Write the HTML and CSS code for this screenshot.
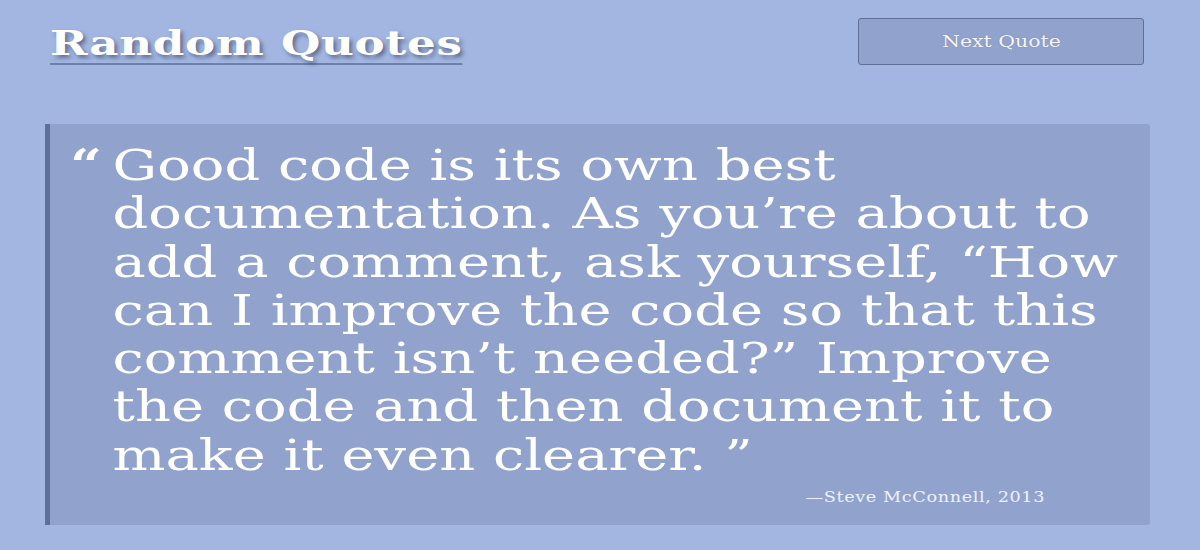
FILE: index.html
```html
<!DOCTYPE html>
<html>
<head>
<meta charset="utf-8">
<link rel="stylesheet" href="styles.css">
</head>
<body>
<header class="top">
  <h1 class="title">Random Quotes</h1>
  <button class="next"><span class="next-label">Next Quote</span></button>
</header>
<main class="quote-box">
  <div class="quote-row">
    <span class="mark open">“</span>
    <p class="quote-text">Good code is its own best documentation. As you’re about to add a comment, ask yourself, “How can I improve the code so that this comment isn’t needed?” Improve the code and then document it to make it even clearer. ”</p>
  </div>
  <div class="attribution"><span class="attr-text">—Steve McConnell, 2013</span></div>
</main>
</body>
</html>
```
FILE: styles.css
```css
html, body {
  margin: 0;
  padding: 0;
}
body {
  background: #a3b6e1;
  width: 1200px;
  height: 550px;
  overflow: hidden;
  font-family: "DejaVu Serif", "Liberation Serif", serif;
  color: #ffffff;
}
.top {
  display: flex;
  justify-content: space-between;
  align-items: flex-start;
  padding: 18px 56px 0 50px;
  height: 106px;
  box-sizing: border-box;
}
.title {
  margin: 0;
  margin-top: 9px;
  font-size: 33px;
  font-weight: bold;
  line-height: 33px;
  padding-bottom: 3px;
  border-bottom: 2px solid #6f80a8;
  text-shadow: 2px 3px 4px rgba(40, 50, 80, 0.55);
  letter-spacing: 0.5px;
  transform: scaleX(1.37);
  transform-origin: left top;
}
.next {
  width: 286px;
  height: 47px;
  background: #91a3cd;
  border: 1px solid #5f6f96;
  border-radius: 3px;
  color: #f4f6fb;
  font-family: "DejaVu Serif", "Liberation Serif", serif;
  font-size: 16px;
  padding: 0;
}
.next-label {
  display: inline-block;
  transform: scaleX(1.28);
  text-shadow: 0 0 1px rgba(60, 70, 100, 0.4);
}
.quote-box {
  margin: 18px 50px 0 45px;
  height: 401px;
  box-sizing: border-box;
  background: #91a3cd;
  border-left: 5px solid #5f6f96;
  border-radius: 0 3px 3px 0;
  padding: 18px 0 0 20px;
}
.quote-row {
  display: flex;
  width: 802px;
  transform: scaleX(1.33);
  transform-origin: left top;
  font-size: 42px;
  line-height: 48.3px;
}
.open {
  flex: 0 0 32px;
  font-weight: bold;
}
.quote-text {
  margin: 0;
  flex: 0 0 770px;
}
.attribution {
  text-align: right;
  padding-right: 105px;
  margin-top: 8px;
  font-size: 15px;
  letter-spacing: 0.5px;
  color: #eef1f9;
}
.attr-text {
  display: inline-block;
  transform: scaleX(1.18);
  transform-origin: right center;
}
```
